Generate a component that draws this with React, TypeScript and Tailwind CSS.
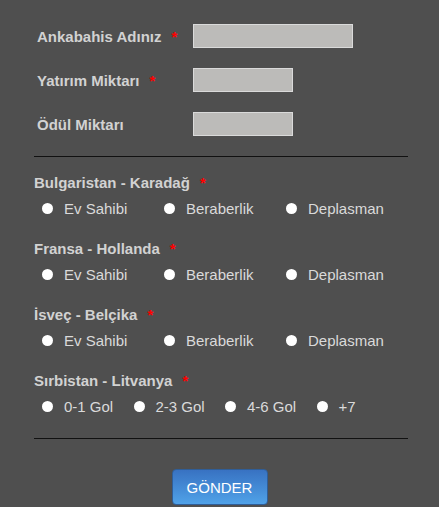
import React from 'react';

const matches = [
  { title: 'Bulgaristan - Karadağ', options: ['Ev Sahibi', 'Beraberlik', 'Deplasman'], col: 'w-[123px]' },
  { title: 'Fransa - Hollanda', options: ['Ev Sahibi', 'Beraberlik', 'Deplasman'], col: 'w-[123px]' },
  { title: 'İsveç - Belçika', options: ['Ev Sahibi', 'Beraberlik', 'Deplasman'], col: 'w-[123px]' },
  { title: 'Sırbistan - Litvanya', options: ['0-1 Gol', '2-3 Gol', '4-6 Gol', '+7'], col: 'w-[93.5px]' },
];

const Star = () => <span className="ml-[10px] text-[#ff0000]">*</span>;

export default function App() {
  return (
    <div
      className="min-h-[507px] bg-[#4f4f4f] text-[15px] leading-[17px]"
      style={{ fontFamily: '"Liberation Sans", Arial, sans-serif' }}
    >
      <form className="ml-[34px] w-[374px] pt-[24px] pb-[2px]" onSubmit={(e) => e.preventDefault()}>
        {/* Top inputs */}
        <div className="flex flex-col gap-[20px]">
          <div className="flex items-center h-[24px]">
            <label className="w-[159px] pl-[3px] font-bold text-[#d2d2d2]">
              Ankabahis Adınız<Star />
            </label>
            <input className="w-[160px] h-[24px] bg-[#bcbbb9] border border-[#dadada] outline-none" />
          </div>
          <div className="flex items-center h-[24px]">
            <label className="w-[159px] pl-[3px] font-bold text-[#d2d2d2]">
              Yatırım Miktarı<Star />
            </label>
            <input className="w-[100px] h-[24px] bg-[#bcbbb9] border border-[#dadada] outline-none" />
          </div>
          <div className="flex items-center h-[24px]">
            <label className="w-[159px] pl-[3px] font-bold text-[#d2d2d2]">Ödül Miktarı</label>
            <input className="w-[100px] h-[24px] bg-[#bcbbb9] border border-[#dadada] outline-none" />
          </div>
        </div>

        <div className="mt-[20px] h-px bg-[#111111]" />

        {/* Matches */}
        <div className="mt-[17px] flex flex-col gap-[23px]">
          {matches.map((m, i) => (
            <div key={m.title}>
              <div className="font-bold text-[#d2d2d2]">
                {m.title}
                <Star />
              </div>
              <div className="mt-[9px] flex pl-[8px]">
                {m.options.map((o) => (
                  <label key={o} className={`${m.col} flex items-center gap-[11px] text-[#dadada]`}>
                    <input
                      type="radio"
                      name={`match-${i}`}
                      className="appearance-none w-[11px] h-[11px] rounded-full bg-white shrink-0 m-0"
                    />
                    <span>{o}</span>
                  </label>
                ))}
              </div>
            </div>
          ))}
        </div>

        <div className="mt-[23px] h-px bg-[#111111]" />
      </form>

      <div className="flex justify-center pt-[28px]">
        <button
          type="submit"
          className="w-[96px] h-[36px] rounded-[4px] border border-[#2f5e98] bg-gradient-to-b from-[#3872c2] to-[#50a2e8] text-white text-[15px]"
        >
          GÖNDER
        </button>
      </div>
    </div>
  );
}
